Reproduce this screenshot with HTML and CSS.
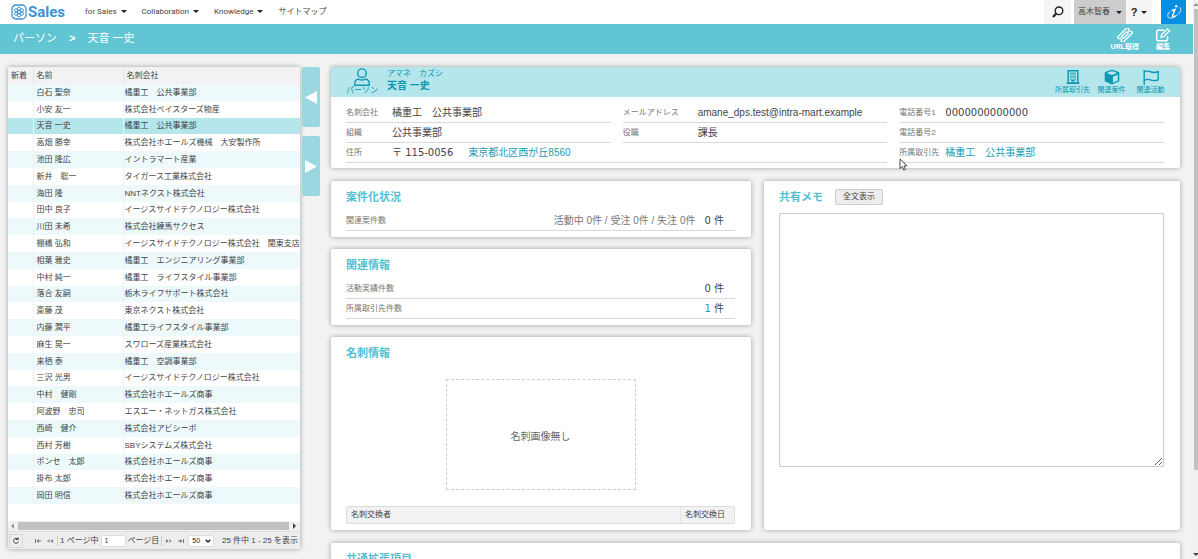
FILE: index.html
```html
<!DOCTYPE html>
<html lang="ja">
<head>
<meta charset="utf-8">
<title>パーソン &gt; 天音 一史</title>
<link rel="stylesheet" href="styles.css">
</head>
<body>
<div class="app">
  <header class="topbar">
    <a class="logo" href="#">
      <svg class="logo-mark" viewBox="0 0 16 16" aria-hidden="true">
        <rect x="1" y="1" width="14" height="14" rx="4" fill="none" stroke="currentColor" stroke-width="1.3"/>
        <g fill="none" stroke="currentColor" stroke-width="1">
          <circle cx="8" cy="8" r="1.5"/>
          <circle cx="8" cy="4.7" r="1.6"/><circle cx="8" cy="11.3" r="1.6"/>
          <circle cx="5.1" cy="6.4" r="1.6"/><circle cx="10.9" cy="6.4" r="1.6"/>
          <circle cx="5.1" cy="9.7" r="1.6"/><circle cx="10.9" cy="9.7" r="1.6"/>
        </g>
      </svg>
      <span>Sales</span>
    </a>
    <nav class="menu">
      <button type="button">for Sales<i class="caret"></i></button>
      <button type="button">Collaboration<i class="caret"></i></button>
      <button type="button">Knowledge<i class="caret"></i></button>
      <a href="#">サイトマップ</a>
    </nav>
    <div class="tools">
      <button type="button" class="tool search" aria-label="検索">
        <svg viewBox="0 0 12 12"><circle cx="7" cy="4.8" r="3.8" fill="none" stroke="currentColor" stroke-width="1.4"/><path d="M4.2 7.6 1 11" stroke="currentColor" stroke-width="2.2"/></svg>
      </button>
      <button type="button" class="tool user">高木智春<i class="caret"></i></button>
      <button type="button" class="tool help">?<i class="caret"></i></button>
      <button type="button" class="tool info" aria-label="情報">
        <svg viewBox="0 0 16 18" fill="none" stroke="currentColor"><circle cx="10.2" cy="3.2" r="1.2" fill="currentColor" stroke="none"/><path d="M5.6 7.6 9 6.4 6.6 12.6c-.4 1.3.4 1.7 1.5 1l1.4-1" stroke-width="1.5"/><path d="M4.4 8.2C1.6 10.4.8 13.6 3 14.8c2.8 1.3 8.2-1.6 10.6-5.2 1.5-2.3 1.5-4.4.2-5.3" stroke-width=".8"/></svg>
      </button>
    </div>
  </header>

  <div class="titlebar">
    <h1>パーソン<span class="sep">&gt;</span>天音 一史</h1>
    <div class="actions">
      <button type="button">
        <svg viewBox="0 0 16 14" fill="none" stroke="currentColor"><g transform="rotate(-45 8 7)"><path d="M1 3.200h14v2.300a1.500 1.500 0 0 0 0 3v2.300H1V8.500a1.500 1.500 0 0 0 0-3z" stroke-width="1.300"/><path d="M4.500 5.600h7v2.800h-7z" stroke-width="1.200"/></g></svg>
        URL取得
      </button>
      <button type="button">
        <svg viewBox="0 0 16 14" fill="none" stroke="currentColor"><path d="M9 2.200H3.200a1.500 1.500 0 0 0-1.500 1.500v7.600a1.500 1.500 0 0 0 1.500 1.500h7.800a1.500 1.500 0 0 0 1.500-1.500V8.200" stroke-width="1.500"/><path d="M6 9.200l.5-2.400L12.500.9l2 2-6 5.800z" stroke-width="1.300"/></svg>
        編集
      </button>
    </div>
  </div>

  <main class="main">
    <section class="list card">
      <div class="list-body">
        <table class="people">
          <colgroup><col class="c-new"><col class="c-name"><col></colgroup>
          <thead><tr><th>新着</th><th>名前</th><th>名刺会社</th></tr></thead>
          <tbody>
            <tr><td></td><td>白石 聖奈</td><td>橘重工　公共事業部</td></tr>
            <tr><td></td><td>小安 友一</td><td>株式会社ベイスターズ物産</td></tr>
            <tr class="selected"><td></td><td>天音 一史</td><td>橘重工　公共事業部</td></tr>
            <tr><td></td><td>高畑 勝幸</td><td>株式会社ホエールズ機械　大安製作所</td></tr>
            <tr><td></td><td>池田 隆広</td><td>イントラマート産業</td></tr>
            <tr><td></td><td>新井　聡一</td><td>タイガース工業株式会社</td></tr>
            <tr><td></td><td>海田 隆</td><td>NNTネクスト株式会社</td></tr>
            <tr><td></td><td>田中 良子</td><td>イージスサイドテクノロジー株式会社</td></tr>
            <tr><td></td><td>川田 未希</td><td>株式会社練馬サクセス</td></tr>
            <tr><td></td><td>棚橋 弘和</td><td>イージスサイドテクノロジー株式会社　関東支店</td></tr>
            <tr><td></td><td>相葉 雅史</td><td>橘重工　エンジニアリング事業部</td></tr>
            <tr><td></td><td>中村 純一</td><td>橘重工　ライフスタイル事業部</td></tr>
            <tr><td></td><td>落合 友嗣</td><td>栃木ライフサポート株式会社</td></tr>
            <tr><td></td><td>斎藤 茂</td><td>東京ネクスト株式会社</td></tr>
            <tr><td></td><td>内藤 潤平</td><td>橘重工ライフスタイル事業部</td></tr>
            <tr><td></td><td>麻生 晃一</td><td>スワローズ産業株式会社</td></tr>
            <tr><td></td><td>来栖 泰</td><td>橘重工　空調事業部</td></tr>
            <tr><td></td><td>三沢 光男</td><td>イージスサイドテクノロジー株式会社</td></tr>
            <tr><td></td><td>中村　健剛</td><td>株式会社ホエールズ商事</td></tr>
            <tr><td></td><td>阿波野　忠司</td><td>エスエー・ネットガス株式会社</td></tr>
            <tr><td></td><td>西崎　健介</td><td>株式会社アビシーボ</td></tr>
            <tr><td></td><td>西村 芳樹</td><td>SBYシステムズ株式会社</td></tr>
            <tr><td></td><td>ポンセ　太郎</td><td>株式会社ホエールズ商事</td></tr>
            <tr><td></td><td>掛布 太郎</td><td>株式会社ホエールズ商事</td></tr>
            <tr><td></td><td>岡田 明信</td><td>株式会社ホエールズ商事</td></tr>
          </tbody>
        </table>
      </div>
      <div class="hscroll"><i class="arrow left"></i><i class="thumb"></i><i class="arrow right"></i></div>
      <div class="pager">
        <button type="button" class="reload" aria-label="更新"><svg viewBox="0 0 8 8" fill="none" stroke="currentColor"><path d="M6 2.200A2.500 2.500 0 1 0 6.500 4.400M3.800 2.500h2.400V.3"/></svg></button>
        <button type="button" class="step" aria-label="最初のページ"><svg viewBox="0 0 8 6"><path d="M1 1h1v4H1zM5 1v4L2.500 3zM5 2.500h2v1H5z" fill="currentColor"/></svg></button>
        <button type="button" class="step" aria-label="前のページ"><svg viewBox="0 0 8 6"><path d="M7 1v4L4.500 3zM4 1.300v1L2.300 3 4 3.700v1L1 3z" fill="currentColor"/></svg></button>
        <i class="divider"></i>
        <label for="page">1 ページ中</label>
        <input id="page" type="text" value="1">
        <label for="page">ページ目</label>
        <i class="divider"></i>
        <button type="button" class="step" aria-label="次のページ"><svg viewBox="0 0 8 6"><path d="M1 1v4l2.500-2zM4 1.300v1L5.700 3 4 3.700v1L7 3z" fill="currentColor"/></svg></button>
        <button type="button" class="step" aria-label="最後のページ"><svg viewBox="0 0 8 6"><path d="M6 1h1v4H6zM3 1v4l2.500-2zM1 2.500h2v1H1z" fill="currentColor"/></svg></button>
        <span class="size">
          <select aria-label="表示件数"><option>50</option><option>100</option></select>
          <svg viewBox="0 0 6 4" fill="none" stroke="currentColor" aria-hidden="true"><path d="M.7.700 3 3 5.300.7" stroke-width="1.400"/></svg>
        </span>
        <span class="total">25 件中 1 - 25 を表示</span>
      </div>
    </section>

    <div class="paddles">
      <button type="button" aria-label="前へ"><svg viewBox="0 0 12 13"><path d="M12 0v13L0 6.500z" fill="currentColor"/></svg></button>
      <button type="button" aria-label="次へ"><svg viewBox="0 0 12 13"><path d="M0 0v13l12-6.500z" fill="currentColor"/></svg></button>
    </div>

    <div class="detail">
      <section class="card person">
        <div class="person-head">
          <div class="kind">
            <svg viewBox="0 0 16 18" fill="none" stroke="currentColor" stroke-width="1.400"><circle cx="8" cy="5.200" r="4.300"/><path d="M.8 17.200v-2.200c0-2.400 1.700-3.900 3.900-3.700 2.200 1 4.400 1 6.600 0 2.200-.2 3.900 1.300 3.900 3.700v2.200z"/></svg>
            <span>パーソン</span>
          </div>
          <div class="names"><span class="kana">アマネ　カズシ</span><strong>天音 一史</strong></div>
          <div class="links">
            <a href="#"><svg viewBox="0 0 16 16" fill="none" stroke="currentColor"><path d="M3.200 1.700h9.600v12.600H3.200z" stroke-width="1.500"/><path d="M1.500 14.300h13" stroke-width="1.500"/><path d="M6 3.500v8M8 3.500v7M10 3.500v8" stroke-dasharray="2 1" stroke-width="1.300"/><path d="M7 14v-2.500h2V14"/></svg>所属取引先</a>
            <a href="#"><svg viewBox="0 0 16 16"><path d="M8 .5l7.300 2.700v9L8 15.600.7 12.200v-9z" fill="currentColor"/><path d="M2.600 3.900 8 2l5.400 1.900L8 6z" fill="#b5e6ec"/><path d="M8.900 7.700l4.900-2v5.700l-4.900 2.300z" fill="#b5e6ec"/></svg>関連案件</a>
            <a href="#"><svg viewBox="0 0 16 16" fill="none" stroke="currentColor" stroke-width="1.400"><path d="M1.200 1v15M1.200 3c2.600-1.600 4.800-1 7 0 2.200.8 4.300.6 7-.4v8.200c-2.600 1-4.800 1.200-7 .4-2.200-1-4.400-1.400-7 .3"/></svg>関連活動</a>
          </div>
        </div>
        <dl class="fields">
          <div class="field a"><dt>名刺会社</dt><dd>橘重工　公共事業部</dd></div>
          <div class="field b"><dt>メールアドレス</dt><dd>amane_dps.test@intra-mart.example</dd></div>
          <div class="field a"><dt>電話番号1</dt><dd class="num">0000000000000</dd></div>
          <div class="field a"><dt>組織</dt><dd>公共事業部</dd></div>
          <div class="field b"><dt>役職</dt><dd>課長</dd></div>
          <div class="field a"><dt>電話番号2</dt><dd></dd></div>
          <div class="field a wide"><dt>住所</dt><dd><span class="num">〒 115-0056</span><a class="addr" href="#">東京都北区西が丘8560</a></dd></div>
          <div class="field a"><dt>所属取引先</dt><dd><a href="#">橘重工　公共事業部</a></dd></div>
        </dl>
      </section>

      <div class="columns">
        <div class="stack">
          <section class="card block">
            <h2>案件化状況</h2>
            <div class="row"><span>関連案件数</span><span class="count"><span class="split">活動中 0件 / 受注 0件 / 失注 0件</span><span class="num">0 件</span></span></div>
          </section>
          <section class="card block">
            <h2>関連情報</h2>
            <div class="row"><span>活動実績件数</span><span class="count num">0 件</span></div>
            <div class="row"><span>所属取引先件数</span><span class="count num"><a href="#">1</a> 件</span></div>
          </section>
          <section class="card block">
            <h2>名刺情報</h2>
            <div class="noimage">名刺画像無し</div>
            <table class="exchange"><thead><tr><th>名刺交換者</th><th class="date">名刺交換日</th></tr></thead></table>
          </section>
        </div>
        <section class="card block memo">
          <div class="memo-head"><h2><label for="memo">共有メモ</label></h2><button type="button">全文表示</button></div>
          <textarea id="memo"></textarea>
        </section>
      </div>

      <section class="card block extra"><h2>共通拡張項目</h2></section>
    </div>
  </main>
</div>
<div class="vscroll"><i class="arrow up"></i><i class="vthumb"></i><i class="arrow down"></i></div>
<svg class="pointer" viewBox="0 0 9 13" aria-hidden="true"><path d="M1 1v9.500l2.300-2 1.500 3.500 1.700-.8L5 7.900h3z" fill="#fff" stroke="#333" stroke-width=".9"/></svg>
</body>
</html>
```
FILE: styles.css
```css
:root {
  --teal: #62c5d4;
  --pale: #b5e6ec;
  --link: #1b9cb5;
  --line: #d9d9d9;
}

* { box-sizing: border-box; }

body {
  margin: 0;
  height: 100vh;
  display: flex;
  overflow: hidden;
  background: #f2f2f2;
  color: #444;
  font: 8px/16px "Liberation Sans", "Noto Sans CJK JP", sans-serif;
}

button, input, select, textarea {
  font: inherit;
  color: inherit;
  margin: 0;
}

button {
  padding: 0;
  border: 0;
  background: none;
}

a { color: var(--link); text-decoration: none; }
h1, h2, dl, dd { margin: 0; }
svg { display: block; }

.app {
  flex: 1;
  min-width: 0;
  display: flex;
  flex-direction: column;
}

.caret {
  display: inline-block;
  margin-left: 4px;
  border: 3px solid transparent;
  border-top-color: #222;
  border-bottom: 0;
  vertical-align: middle;
}

/* top bar */
.topbar {
  height: 24px;
  flex: none;
  display: flex;
  align-items: center;
  padding: 0 7px 0 11px;
  background: #fff;
}

.logo {
  display: flex;
  align-items: center;
  gap: 1px;
  color: #3a93d3;
  font: bold 15px/16px Roboto, sans-serif;
}

.logo-mark { width: 16px; height: 16px; }

.menu {
  flex: 1;
  display: flex;
  gap: 15px;
  margin-left: 20px;
  font-family: Roboto, "Noto Sans CJK JP", sans-serif;
}

.menu a { color: #444; }

.tools { display: flex; align-self: stretch; }

.tool {
  display: flex;
  align-items: center;
  justify-content: center;
  background: #f5f5f5;
}

.search { width: 27px; margin-right: 3px; color: #222; }
.search svg { width: 12px; height: 12px; }
.user { width: 52px; background: #ccc; }
.user .caret { margin-left: 6px; }
.help { width: 26px; color: #222; font-size: 11px; font-weight: bold; }
.info { width: 25px; margin-left: 9px; background: #0a8ee0; color: #fff; }
.info svg { width: 16px; height: 18px; }

/* page title */
.titlebar {
  flex: none;
  height: 30px;
  display: flex;
  justify-content: space-between;
  padding: 0 22px 0 13px;
  background: var(--teal);
  color: #fff;
}

.titlebar h1 { font-size: 11px; font-weight: normal; line-height: 28px; }
.sep { margin: 0 12px; font-weight: bold; }

.actions { display: flex; gap: 16px; }

.actions button {
  display: flex;
  flex-direction: column;
  align-items: center;
  padding-top: 4px;
  font-size: 7px;
  font-weight: bold;
  line-height: 10px;
}

.actions svg { width: 16px; height: 14px; }

/* main area */
.main {
  flex: 1;
  min-height: 0;
  display: flex;
  padding: 13px 13px 0 8px;
}

.card {
  background: #fff;
  border-radius: 2px;
  box-shadow: 0 0 5px rgba(0, 0, 0, .35);
}

.list {
  width: 292px;
  flex: none;
  display: flex;
  flex-direction: column;
  margin-bottom: 10px;
  overflow: hidden;
}

.list-body { flex: 1; min-height: 0; overflow: hidden; }

.people {
  width: 100%;
  table-layout: fixed;
  border-collapse: collapse;
}

.c-new { width: 25px; }
.c-name { width: 90px; }

.people th, .people td {
  height: 17px;
  padding: 0 0 0 3px;
  border-left: 1px solid #f1f1f1;
  font-weight: normal;
  line-height: 16px;
  text-align: left;
  white-space: nowrap;
}

.people th { background: #f2f2f2; border-left-color: #e6e6e6; }
.people th:first-child, .people td:first-child { border-left: 0; }
.people td + td + td { padding-left: 1px; }
.people tbody tr:nth-child(odd) { background: #edf9fb; }
.people tbody tr:nth-child(5n + 3) td { height: 16px; }
.people tbody tr.selected { background: var(--pale); }

.arrow { border: 3px solid transparent; }
.arrow.left { border-right-color: #999; border-left: 0; }
.arrow.right { border-left-color: #444; border-right: 0; }
.arrow.up { border-bottom-color: #999; border-top: 0; }
.arrow.down { border-top-color: #444; border-bottom: 0; }

.hscroll {
  height: 10px;
  display: flex;
  align-items: center;
  gap: 4px;
  padding: 0 4px 0 3px;
  background: #f1f1f1;
}

.thumb { flex: 1; height: 8px; background: #c1c1c1; }

.pager {
  height: 18px;
  display: flex;
  align-items: center;
  gap: 2px;
  padding: 0 2px 0 1px;
  background: #ededed;
  border-top: 1px solid #e0e0e0;
  white-space: nowrap;
}

.reload {
  width: 14px;
  height: 14px;
  display: grid;
  place-items: center;
  margin-right: 8px;
  border: 1px solid #d5d5d5;
}

.reload svg { width: 8px; height: 8px; }
.step { padding: 0 1px; color: #777; }
.step svg { width: 8px; height: 6px; }
.divider { width: 1px; height: 10px; background: #ccc; }

.pager input {
  width: 25px;
  height: 12px;
  padding: 0 3px;
  border: 1px solid #ddd;
  border-radius: 2px;
  background: #fff;
  font-size: 7px;
}

.size {
  display: grid;
  align-items: center;
  background: #fff;
  border: 1px solid #ddd;
  border-radius: 2px;
  color: #222;
}

.size select {
  grid-area: 1 / 1;
  width: 24px;
  height: 10px;
  padding: 0 0 0 3px;
  border: 0;
  background: none;
  appearance: none;
  font-size: 7px;
  line-height: 10px;
}

.size svg {
  grid-area: 1 / 1;
  justify-self: end;
  width: 6px;
  height: 4px;
  margin-right: 2px;
  pointer-events: none;
}

.total { margin-left: auto; }

/* previous / next paddles */
.paddles {
  flex: none;
  display: flex;
  flex-direction: column;
  gap: 9px;
  margin: 0 11px 0 2px;
}

.paddles button {
  width: 18px;
  height: 60px;
  display: grid;
  place-items: center;
  border-radius: 2px;
  background: #9ad7e0;
  color: #fff;
}

.paddles svg { width: 12px; height: 13px; }

/* detail side */
.detail {
  flex: 1;
  min-width: 0;
  display: flex;
  flex-direction: column;
  gap: 13px;
}

.detail > * { flex: none; }

.person-head {
  height: 30px;
  display: flex;
  align-items: flex-start;
  padding: 1px 12px 0 15px;
  border-radius: 2px 2px 0 0;
  background: var(--pale);
  color: #0f97b1;
}

.kind {
  width: 32px;
  display: flex;
  flex-direction: column;
  align-items: center;
  line-height: 10px;
}

.kind svg { width: 16px; height: 18px; }

.names {
  flex: 1;
  display: flex;
  flex-direction: column;
  margin-left: 9px;
  line-height: 12px;
}

.names strong { font-size: 10px; }

.links { display: flex; gap: 4px; }

.links a {
  width: 35px;
  display: flex;
  flex-direction: column;
  align-items: center;
  padding-top: 1px;
  color: #0f97b1;
  font-size: 7px;
  line-height: 10px;
  white-space: nowrap;
}

.links svg { width: 16px; height: 16px; }

.fields {
  display: grid;
  grid-template-columns: repeat(3, 1fr);
  column-gap: 12px;
  padding: 6px 16px 5px 15px;
}

.field {
  height: 20px;
  display: flex;
  border-bottom: 1px solid var(--line);
  line-height: 19px;
}

.field.wide { grid-column: span 2; }
.field dt { color: #777; }
.field.a dt { width: 46px; }
.field.b dt { width: 75px; }
.field dd { font-size: 10px; white-space: nowrap; }
.addr { margin-left: 15px; }
.num { font-family: "DejaVu Sans", "Noto Sans CJK JP", sans-serif; }

.columns {
  display: grid;
  grid-template-columns: 420fr 416fr;
  gap: 13px;
}

.stack { display: flex; flex-direction: column; gap: 12px; }

.block { padding: 8px 16px 6px 15px; }

.block h2 {
  margin-bottom: 6px;
  color: #52bfd0;
  font-size: 11px;
  line-height: 16px;
}

.row {
  height: 20px;
  display: flex;
  justify-content: space-between;
  padding-right: 11px;
  border-bottom: 1px solid var(--line);
  color: #777;
  line-height: 19px;
}

.count { color: #444; font-size: 10px; }
.split { margin-right: 9px; color: #777; }

.noimage {
  width: 190px;
  height: 111px;
  display: grid;
  place-items: center;
  margin: 18px auto 16px;
  padding-top: 5px;
  border: 1px dashed #ccc;
  color: #666;
  font-size: 10px;
}

.exchange {
  width: 100%;
  border: 1px solid #ddd;
  border-radius: 2px;
  border-spacing: 0;
  background: #f2f2f2;
}

.exchange th {
  padding: 0 4px;
  font-weight: normal;
  text-align: left;
}

.exchange .date { width: 54px; border-left: 1px solid #e4e4e4; }

.memo-head { display: flex; align-items: center; gap: 12px; margin-bottom: 8px; }
.memo-head h2 { margin: 0; }

.memo-head button {
  height: 16px;
  padding: 0 7px;
  border: 1px solid #ccc;
  border-radius: 2px;
  background: #ededed;
  line-height: 14px;
}

.memo textarea {
  display: block;
  width: 100%;
  height: 254px;
  border: 1px solid #ccc;
  background: #fff;
  font-size: 10px;
}

.extra { min-height: 60px; }

/* page scrollbar */
.vscroll {
  width: 5px;
  display: flex;
  flex-direction: column;
  align-items: center;
  padding: 3px 0;
  background: #f1f1f1;
}

.vthumb { width: 4px; height: 461px; margin: 3px 0 auto 1px; background: #c1c1c1; }

.pointer {
  position: absolute;
  left: 899px;
  top: 158px;
  width: 9px;
  height: 13px;
}
```
